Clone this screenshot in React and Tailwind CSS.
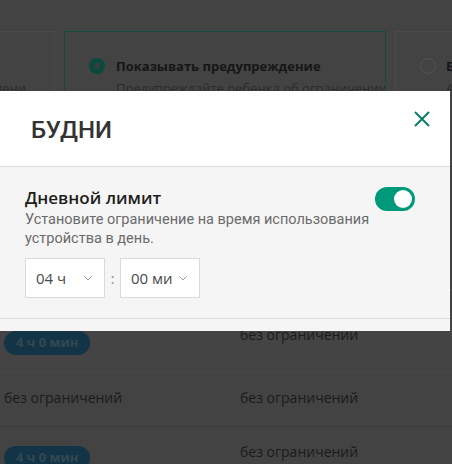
export default function App() {
  return (
    <div className="relative w-[452px] h-[464px] overflow-hidden bg-[#434343] font-['Open_Sans',sans-serif]">
      {/* Underlying page (dimmed) */}
      <div className="flex flex-col pt-[31px]">
        <div className="flex gap-[9px] ml-[-267px] h-[288px]">
          <div className="w-[322px] shrink-0 h-[260px] border border-[#4b4b4b] pt-[47px] overflow-hidden">
            <div className="text-right pr-[28px] text-[13px] leading-[18px] text-[#2a2a2a] whitespace-nowrap">ограничения по времени</div>
          </div>
          <div className="w-[322px] shrink-0 h-[260px] border border-[#0f4d42] pt-[24px] pl-[24px] overflow-hidden">
            <div className="flex items-center gap-[11px]">
              <div className="w-[16px] h-[16px] rounded-full border-[5px] border-[#0a4a3e] bg-[#3c3c3c] shrink-0" />
              <div className="text-[13px] leading-[20px] font-bold text-[#161616] whitespace-nowrap">Показывать предупреждение</div>
            </div>
            <div className="pl-[27px] mt-[3px] text-[13px] leading-[18px] text-[#2a2a2a] whitespace-nowrap">Предупреждайте ребенка об ограничении</div>
          </div>
          <div className="w-[322px] shrink-0 h-[260px] border border-[#4b4b4b] pt-[24px] pl-[24px] overflow-hidden">
            <div className="flex items-center gap-[10px]">
              <div className="w-[16px] h-[16px] rounded-full border border-[#555] shrink-0" />
              <div className="text-[13px] leading-[20px] font-bold text-[#161616] whitespace-nowrap">Блокировать устройство</div>
            </div>
            <div className="pl-[26px] mt-[3px] text-[13px] leading-[18px] text-[#2a2a2a] whitespace-nowrap">Автоматически блокировать</div>
          </div>
        </div>
        <div className="flex h-[54px] pl-[4px] border-b border-[#474747] bg-[#444444]">
          <div className="w-[236px] shrink-0 pt-[10px]">
            <div className="inline-flex items-center h-[24px] px-[12px] rounded-full bg-[#133447] text-[13px] font-bold text-[#344850]">4 ч 0 мин</div>
          </div>
          <div className="pt-[6px] text-[14px] leading-[20px] text-[#1b1b1b]">без ограничений</div>
        </div>
        <div className="flex h-[54px] pl-[4px] border-b border-[#393939]">
          <div className="w-[236px] shrink-0 pt-[15px] text-[14px] leading-[20px] text-[#1b1b1b]">без ограничений</div>
          <div className="pt-[15px] text-[14px] leading-[20px] text-[#1b1b1b]">без ограничений</div>
        </div>
        <div className="flex h-[54px] pl-[4px]">
          <div className="w-[236px] shrink-0 pt-[17px]">
            <div className="inline-flex items-center h-[24px] px-[12px] rounded-full bg-[#133447] text-[13px] font-bold text-[#344850]">4 ч 0 мин</div>
          </div>
          <div className="pt-[15px] text-[14px] leading-[20px] text-[#1b1b1b]">без ограничений</div>
        </div>
      </div>

      {/* Modal */}
      <div className="absolute left-0 top-[91px] w-[450px] h-[240px] bg-[#f5f5f5] flex flex-col overflow-hidden">
        <div className="h-[76px] shrink-0 bg-white border-b border-[#dcdcdc] flex justify-between pl-[31px] pr-[20px]">
          <div className="pt-[23px] text-[24px] leading-[32px] text-[#333333] font-medium font-['Roboto',sans-serif]">БУДНИ</div>
          <button className="mt-[20px] w-[16px] h-[16px]">
            <svg width="16" height="16" viewBox="0 0 16 16" fill="none">
              <path d="M1 1L15 15M15 1L1 15" stroke="#0d7d6b" strokeWidth="2" />
            </svg>
          </button>
        </div>
        <div className="pl-[25px] pr-[35px] pt-[19px] pb-[20px] border-b border-[#dcdcdc]">
          <div className="flex justify-between items-start">
            <div>
              <div className="text-[17px] leading-[24px] font-semibold text-[#1d1d1b]">Дневной лимит</div>
              <div className="text-[14.5px] leading-[19px] text-[#6b6b6b] w-[345px] font-['Roboto',sans-serif]">Установите ограничение на время использования устройства в день.</div>
            </div>
            <div className="mt-[1px] w-[40px] h-[24px] rounded-full bg-[#00997a] flex items-center justify-end pr-[3px]">
              <div className="w-[18px] h-[18px] rounded-full bg-white" />
            </div>
          </div>
          <div className="mt-[10px] flex items-center">
            <div className="w-[80px] h-[40px] border border-[#dadada] bg-white flex items-center justify-between pl-[10px] pr-[12px]">
              <span className="text-[15px] text-[#4a4a4a]">04 ч</span>
              <svg width="8" height="5" viewBox="0 0 8 5" fill="none"><path d="M0.5 0.5L4 4L7.5 0.5" stroke="#9a9a9a" strokeWidth="1" /></svg>
            </div>
            <div className="w-[15px] text-center text-[14px] text-[#8a8a8a]">:</div>
            <div className="w-[80px] h-[40px] border border-[#dadada] bg-white flex items-center justify-between pl-[10px] pr-[12px]">
              <span className="text-[15px] text-[#4a4a4a]">00 ми</span>
              <svg width="8" height="5" viewBox="0 0 8 5" fill="none"><path d="M0.5 0.5L4 4L7.5 0.5" stroke="#9a9a9a" strokeWidth="1" /></svg>
            </div>
          </div>
        </div>
      </div>
    </div>
  );
}
